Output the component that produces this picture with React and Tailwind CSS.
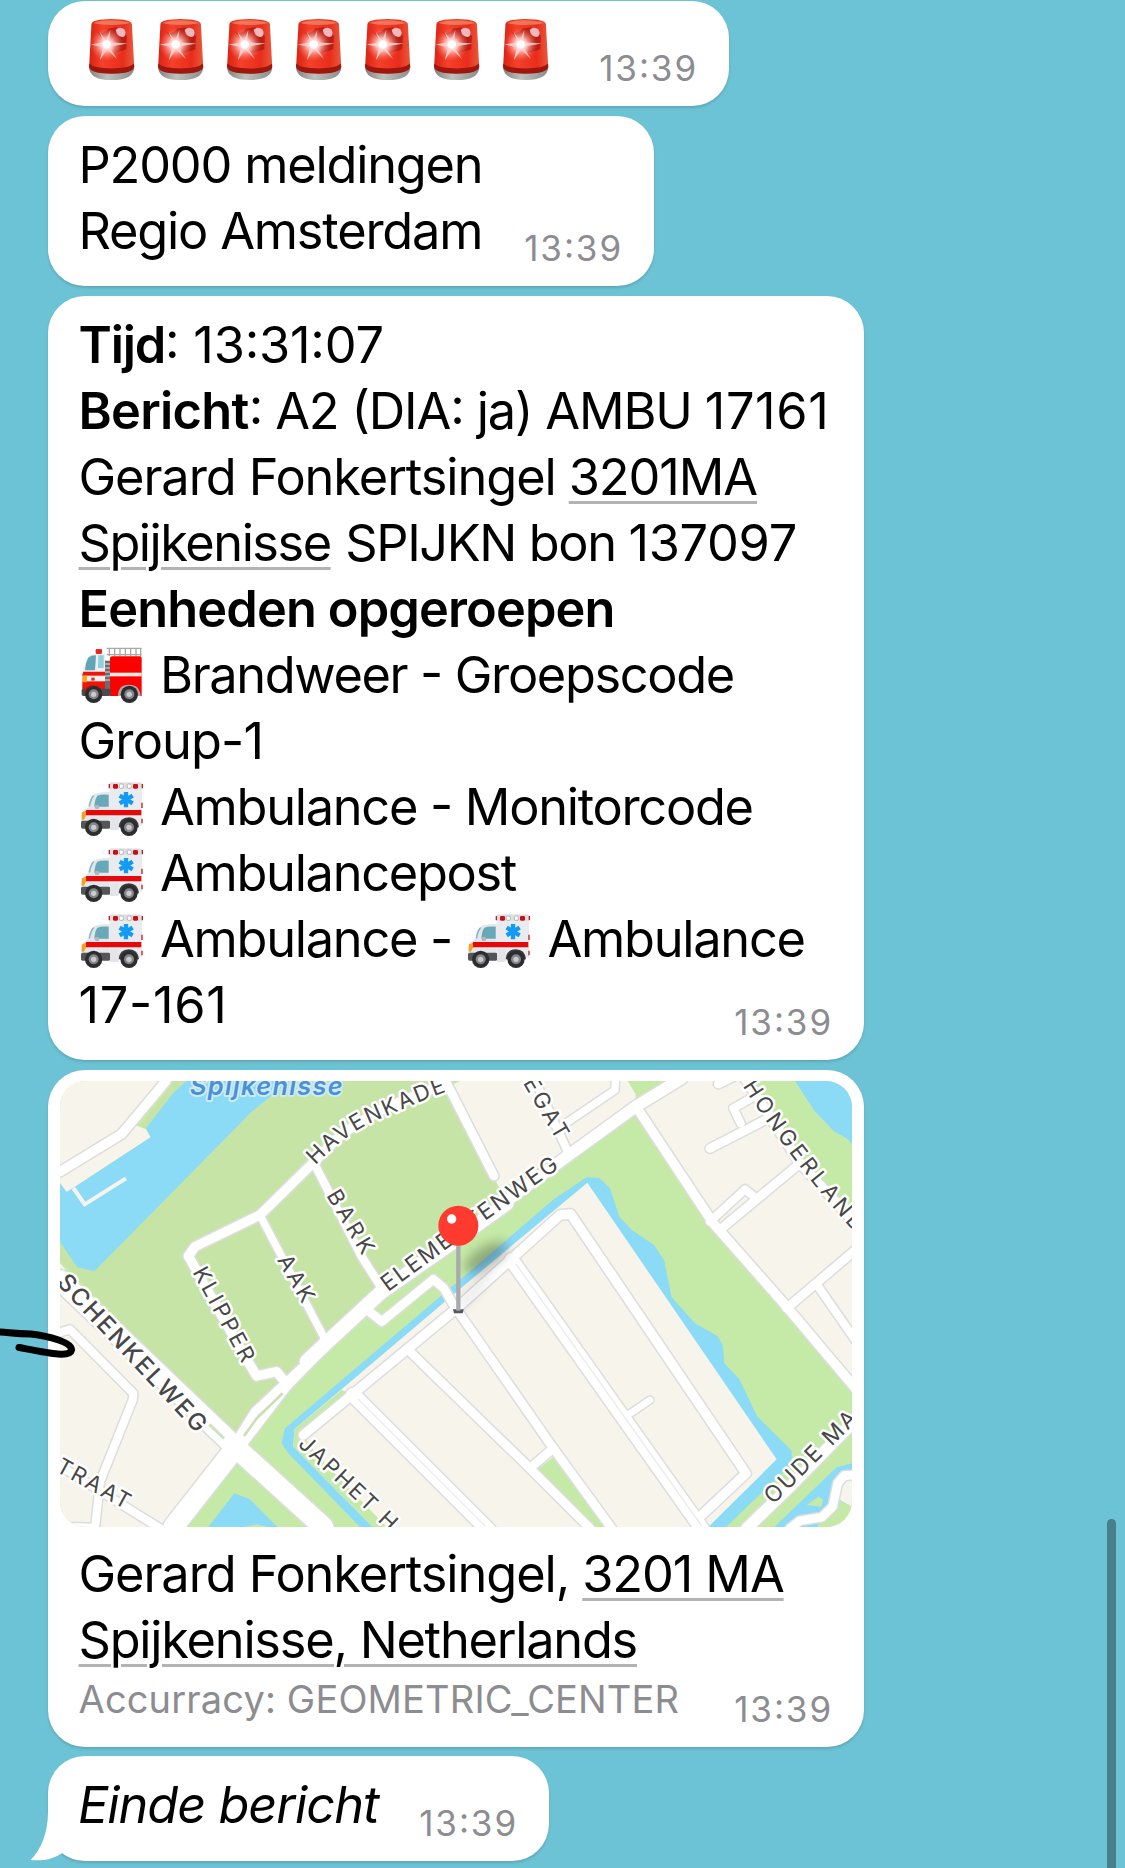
import React from "react";

function Siren() {
  return (
    <svg viewBox="145 54 144 190" className="h-[63px] w-[48px]">
      <defs>
        <linearGradient id="sirenBody" x1="0" x2="1" y1="0" y2="0">
          <stop offset="0" stopColor="#d92214" />
          <stop offset="0.3" stopColor="#f5402a" />
          <stop offset="0.75" stopColor="#e92d1c" />
          <stop offset="1" stopColor="#e85a3c" />
        </linearGradient>
        <linearGradient id="sirenBase" x1="0" x2="1" y1="0" y2="0">
          <stop offset="0" stopColor="#7f8280" />
          <stop offset="0.4" stopColor="#bfc1bd" />
          <stop offset="1" stopColor="#8b8d8a" />
        </linearGradient>
        <radialGradient id="sirenGlow">
          <stop offset="0" stopColor="#fff" />
          <stop offset="0.35" stopColor="#ffd9d4" stopOpacity="0.9" />
          <stop offset="1" stopColor="#ff6a5a" stopOpacity="0" />
        </radialGradient>
      </defs>
      <path d="M148 200 Q147 241 216 241 Q285 241 284 200 Z" fill="url(#sirenBase)" />
      <path d="M155 72 Q156 58 215 57 Q275 58 277 72 L284 200 Q280 221 216 221 Q152 221 148 200 Z" fill="url(#sirenBody)" />
      <path d="M148 192 Q165 206 216 206 Q267 206 283 192 L284 202 Q280 222 216 222 Q152 222 148 202 Z" fill="#9c170d" />
      <path d="M160 69 Q180 61 216 61 Q252 61 272 69 Q250 75 216 75 Q180 75 160 69 Z" fill="#ee8a6a" opacity="0.75" />
      <path d="M172 95 Q190 108 206 86 L232 82 L262 108 L260 148 L224 160 L216 130 L190 122 Z" fill="#a81a10" opacity="0.75" />
      <path d="M228 90 Q240 78 254 88 Q262 100 254 110 Q240 114 232 102 Z" fill="#f0b9c0" />
      <circle cx="201" cy="134" r="50" fill="url(#sirenGlow)" />
      <path d="M201 134 m-48 0 L192 127 L180 96 L199 122 L212 90 L208 127 L264 131 L208 141 L232 178 L202 148 L180 182 L190 142 Z" fill="#ffd5d2" opacity="0.85" />
      <circle cx="201" cy="134" r="13" fill="#fff" />
    </svg>
  );
}

function Wheel({ cx, cy }) {
  return (
    <g>
      <circle cx={cx} cy={cy} r="26" fill="#2d2d2f" />
      <circle cx={cx} cy={cy} r="15" fill="#85868a" />
      <circle cx={cx} cy={cy} r="8" fill="#c9cacd" />
    </g>
  );
}

function FireTruck() {
  return (
    <svg viewBox="27 18 195 180" className="mr-[16.5px] inline-block h-[60px] w-[65px] align-[-13.5px]">
      <path d="M110 25 H215 M110 44 H215 M118 25 V48 M134 25 V48 M150 25 V48 M166 25 V48 M182 25 V48 M198 25 V48 M212 25 V48" stroke="#a6a8aa" strokeWidth="4" fill="none" />
      <rect x="77" y="27" width="19" height="15" rx="4" fill="#e8281c" />
      <path d="M62 42 H106 V166 H36 V102 Q42 66 62 42 Z" fill="#eceef0" />
      <path d="M56 52 Q64 46 78 46 L75 91 H45 Q47 66 56 52 Z" fill="#5fa6b5" />
      <path d="M85 46 H101 V84 H84 Z" fill="#8fd0dc" />
      <path d="M40 95 H106 V148 H37 V104 Z" fill="#f01408" />
      <path d="M37 107 H106 V124 H37 Z" fill="#f3efed" />
      <rect x="64" y="113" width="10" height="9" fill="#c93a34" />
      <path d="M38 107 H52 L50 127 H38 Z" fill="#f7a51e" />
      <rect x="105" y="62" width="17" height="100" fill="#6a6c6f" />
      <path d="M105 72 H122 M105 84 H122 M105 96 H122 M105 108 H122 M105 120 H122" stroke="#b5b7ba" strokeWidth="4" />
      <path d="M120 53 Q122 49 128 49 H210 Q215 49 215 54 V168 H120 Z" fill="#fb0200" />
      <rect x="120" y="98" width="95" height="11" fill="#f6e9e7" />
      <path d="M144 168 Q144 134 177 134 Q209 134 212 168 Z" fill="#a9aaac" />
      <rect x="35" y="146" width="87" height="22" rx="5" fill="#4a4b4d" />
      <path d="M43 160 Q45 136 70 136 Q92 136 96 160 Z" fill="#bb1a14" />
      <Wheel cx="71" cy="163" />
      <Wheel cx="178" cy="163" />
    </svg>
  );
}

function Ambulance() {
  return (
    <svg viewBox="57 445 195 180" className="mr-[16.5px] inline-block h-[60px] w-[65px] align-[-13.5px]">
      <path d="M149 458 Q150 454 156 454 H240 Q246 455 246 462 V585 H149 Z" fill="#e9ebee" />
      <rect x="148" y="457" width="98" height="17" rx="5" fill="#dcdee2" />
      <rect x="159" y="460" width="15" height="14" rx="4" fill="#c90f12" />
      <rect x="219" y="460" width="15" height="14" rx="4" fill="#c90f12" />
      <rect x="178" y="460" width="12" height="13" rx="4" fill="#fff" stroke="#9b9da1" strokeWidth="2" />
      <rect x="202" y="460" width="12" height="13" rx="4" fill="#fff" stroke="#9b9da1" strokeWidth="2" />
      <path d="M148 460 V473 M247 460 V473 M246 516 V532 M246 564 V578" stroke="#c7191b" strokeWidth="4" />
      <path d="M84 530 Q90 502 104 490 Q114 484 149 484 V586 H64 V546 Q70 540 84 530 Z" fill="#e4e6e9" />
      <path d="M112 495 Q122 491 146 492 V528 H103 Q104 506 112 495 Z" fill="#67a9b8" />
      <path d="M86 526 Q90 502 99 494 L103 495 Q94 506 90 528 Z" fill="#79b9c8" />
      <circle cx="111" cy="529" r="7" fill="#b3b6ba" />
      <path d="M79 538 H244 V554 H70 Z" fill="#e5090c" />
      <path d="M66 545 Q72 541 78 543 Q80 558 70 568 L65 566 Z" fill="#f8a01d" />
      <path d="M198 484 V530 M179 495 L218 518 M218 495 L179 518" stroke="#139af2" strokeWidth="13" />
      <rect x="63" y="570" width="88" height="24" rx="5" fill="#54565a" />
      <path d="M150 560 H176 V598 H150 Z" fill="#e3e5e8" />
      <path d="M176 590 Q178 560 207 560 Q234 560 237 590 Z" fill="#3a3b3e" />
      <Wheel cx="101" cy="590" />
      <Wheel cx="207" cy="590" />
    </svg>
  );
}

const wideRoads = [
  ["M60 660 L590 1165 L850 1401", 60],
  ["M400 1401 L585 1165", 60],
];

const roads = [
  ["M378 63 L245 222 L60 335", 28],
  ["M595 1135 L645 1055 L800 910", 26],
  ["M608 1150 L740 978 L865 850", 28],
  ["M800 905 L860 848 L1025 695 L1240 545 L1400 430", 42],
  ["M1390 430 L1580 290 L1787 140 L1925 55", 34],
  ["M735 965 L710 935 L650 948 L615 890 L445 588 L465 560 L660 465 L820 308 L905 222 L1010 155 L1215 70", 28],
  ["M1205 40 L1362 348", 26],
  ["M665 475 L855 838", 22],
  ["M825 315 L965 590 L1022 680", 24],
  ["M985 752 L1025 785 L1180 658 L1212 685 L1252 755", 26],
  ["M790 1125 L1250 745 L1560 465 L1592 462 L2118 1240 L1975 1375", 28],
  ["M1480 50 L1582 272", 24],
  ["M1727 40 L1725 90 L1570 195", 22],
  ["M1415 600 L1985 1405", 42],
  ["M1768 1062 L1830 1020", 20],
  ["M1258 760 L1540 1165 L1715 1405", 26],
  ["M1105 870 L1230 992 L1470 1225 L1650 1405", 26],
  ["M1470 1225 L1540 1165", 26],
  ["M940 1005 L1345 1410", 44],
  ["M50 820 L90 808 L280 1000 L278 1020 L180 1265 L165 1405", 24],
  ["M40 1205 L360 1405", 24],
  ["M60 1396 L165 1399", 16],
  ["M1795 150 L2020 490 L2240 740 L2446 985", 28],
  ["M2105 40 L2280 310 L2446 490", 28],
  ["M2010 265 L2175 180", 26],
  ["M2102 190 L2080 145 L2150 105", 24],
  ["M2035 72 L2080 50", 26],
  ["M2010 485 L2115 388 L2145 412", 24],
  ["M2045 505 L2280 310", 26],
  ["M2240 745 L2446 570", 26],
  ["M2335 680 L2446 840", 24],
  ["M2120 1405 L2240 1290 L2446 1080", 34],
  ["M2446 1245 L2412 1247 L2393 1270 L2378 1340 L2345 1372 L2280 1382 L2250 1405", 26],
];

const labels = [
  ["havenkade", "M826 316 C880 260 940 211 1010 181 S1160 116 1228 92", "HAVENKADE", 456, 66, 400],
  ["bark", "M858 406 L974 600", "BARK", 212, 66, 400],
  ["aak", "M710 600 L794 744", "AAK", 154, 66, 400],
  ["klipper", "M457 636 L610 918", "KLIPPER", 314, 66, 400],
  ["schenkelweg", "M48 670 L482 1134", "SCHENKELWEG", 618, 72, 500],
  ["straat", "M44 1232 L266 1354", "TRAAT", 242, 66, 400],
  ["japhet", "M772 1156 L1060 1428", "JAPHET H", 378, 66, 400],
  ["element", "M1044 697 L1300 508 L1576 312", "ELEMENTENWEG", 636, 68, 400],
  ["gegat", "M1448 68 L1560 258", "EGAT", 202, 66, 400],
  ["hongerland", "M2108 78 Q2250 300 2455 530", "HONGERLAND", 556, 66, 400],
  ["oudemaas", "M2200 1335 L2470 1065", "OUDE MA", 362, 68, 400],
];

function MapView() {
  return (
    <svg viewBox="60 63 2376 1338" className="block h-[446px] w-[792px] rounded-[26px]">
      <defs>
        <filter id="pinShadow" x="-50%" y="-50%" width="200%" height="200%">
          <feGaussianBlur stdDeviation="17" />
        </filter>
        {labels.map(([id, d]) => (
          <path key={id} id={id} d={d} />
        ))}
      </defs>
      <rect x="60" y="63" width="2376" height="1338" fill="#c5e9a6" />
      <path d="M60 545 L400 63 H1215 L1380 400 L1025 690 L580 1130 L60 600 Z" fill="#c5e4a6" />
      <path d="M60 63 H390 L285 195 L318 208 L332 232 L105 380 L80 396 L60 370 Z" fill="#f7f4ec" />
      <path d="M440 63 L400 98 L318 205 L332 232 L105 380 L80 396 L60 370 V545 L112 622 L163 634 L635 155 L750 63 Z" fill="#8bdaf6" />
      <path d="M100 384 L134 433 L258 355" stroke="#f7f4ec" strokeWidth="12" fill="none" />
      <path d="M60 610 L560 1150 L370 1401 H60 Z" fill="#f7f4ec" />
      <path d="M1225 80 L1260 63 H1763 L1787 103 V130 L1580 275 L1380 388 Z" fill="#f7f4ec" />
      <path d="M1795 140 L1930 63 H2110 L2436 490 V1000 L2030 510 Z" fill="#f7f4ec" />
      <path d="M2265 63 L2325 155 L2382 214 L2420 235 L2436 252 V63 Z" fill="#8bdaf6" />
      <path d="M1640 352 L1678 354 L1710 385 L1738 470 L1775 510 L1842 555 L1872 600 L1895 712 L1965 790 L2032 828 L2048 855 L2053 910 L2098 958 L2152 1070 L2255 1172 V1212 L2058 1401 H960 L745 1180 L725 1150 L735 1105 L1230 685 L1545 415 Z" fill="#8bdaf6" />
      <path d="M1642 368 L2210 1198 L2005 1401 H998 L760 1160 L763 1108 L1250 695 Z" fill="#f7f4ec" />
      <path d="M763 1108 L905 990 L925 1000 L785 1120 L830 1185 L1040 1401 H998 L760 1160 Z" fill="#c5e9a6" />
      <path d="M1488 1232 L1548 1185 L1705 1401 H1660 Z" fill="#c5e9a6" />
      <path d="M505 1401 L583 1300 L630 1318 L712 1401 H685 L650 1393 L610 1401 Z" fill="#8bdaf6" />
      <path d="M2203 1401 L2390 1222 L2436 1210 V1330 L2345 1401 Z" fill="#8bdaf6" />
      <path d="M2300 1335 L2335 1310 L2348 1318 L2345 1340 Z" fill="#c5e9a6" />
      <path d="M2400 1260 H2436 V1340 L2395 1318 Z" fill="#f7f4ec" />
      <path d="M2330 1401 L2395 1320 L2436 1340 V1375 L2380 1401 Z" fill="#c5e9a6" />
      <path d="M2375 1401 L2436 1378 V1401 Z" fill="#8bdaf6" />

      <g fill="none" stroke="#dcdddd" strokeLinejoin="round" strokeLinecap="round">
        {wideRoads.concat(roads).map(([d, w]) => (
          <path key={d} d={d} strokeWidth={w + 9} />
        ))}
      </g>
      <g fill="none" stroke="#ffffff" strokeLinejoin="round" strokeLinecap="round">
        {wideRoads.concat(roads).map(([d, w]) => (
          <path key={d} d={d} strokeWidth={w} />
        ))}
      </g>
      <path d="M508 1093 L552 1135" stroke="#cfe3bd" strokeWidth="9" />
      <path d="M612 1128 L650 1075 L728 1000" stroke="#c9dfb4" strokeWidth="8" fill="none" />
      <path d="M1428 612 L1985 1398 M955 1018 L1335 1398" stroke="#ebebeb" strokeWidth="4" fill="none" />

      <text x="450" y="105" fontSize="76" fontWeight="600" fontStyle="italic" textLength="458" fill="#4a90d9" stroke="#cdebf0" strokeWidth="12" strokeLinejoin="round" paintOrder="stroke">
        Spijkenisse
      </text>
      <g fill="#474747" stroke="#fff" strokeWidth="15" strokeLinejoin="round" paintOrder="stroke">
        {labels.map(([id, , text, len, size, weight]) => (
          <text key={id} fontSize={size} fontWeight={weight} textLength={len}>
            <textPath href={"#" + id} textLength={len}>
              {text}
            </textPath>
          </text>
        ))}
      </g>

      <ellipse cx="1338" cy="592" rx="72" ry="30" transform="rotate(-32 1338 592)" fill="#000" opacity="0.28" filter="url(#pinShadow)" />
      <path d="M1262 740 L1345 640" stroke="#000" strokeWidth="26" opacity="0.1" filter="url(#pinShadow)" />
      <path d="M1239 748 H1271 L1268 760 H1242 Z" fill="#55575a" />
      <rect x="1248.500" y="550" width="13" height="202" fill="#a8aaad" />
      <circle cx="1255" cy="497" r="60" fill="#ff3b30" />
      <circle cx="1235" cy="477" r="14" fill="#fff" />
    </svg>
  );
}

function Bubble({ className, children }) {
  return (
    <div className={"flex shrink-0 items-end justify-between rounded-[37px] bg-white shadow-[0_2px_3px_rgba(0,0,0,0.14)] " + className}>
      {children}
      <time className="mr-[31px] -ml-[130px] shrink-0 pb-[20px] text-[35px] leading-[36px] tracking-[1.9px] text-[#8c8c91]">13:39</time>
    </div>
  );
}

function Line({ className = "", children }) {
  return <div className={"h-[66.1px] leading-[66.1px] " + className}>{children}</div>;
}

function Link({ children }) {
  return <span className="underline decoration-[#b3b3b3] decoration-[3px] underline-offset-[6px]">{children}</span>;
}

export default function App() {
  return (
    <div className="relative flex h-[1868px] w-[1125px] flex-col gap-[9.5px] overflow-hidden bg-[#6dc3d6] pt-px pl-12 font-[Inter,sans-serif] text-[50.5px] whitespace-pre text-black [font-feature-settings:'calt'_1]">
      <Bubble className="h-[105px] w-[681px]">
        <div className="flex gap-[21px] self-start pt-[17px] pl-10">
          {[0, 1, 2, 3, 4, 5, 6].map((i) => (
            <Siren key={i} />
          ))}
        </div>
      </Bubble>

      <Bubble className="h-[170.5px] w-[606px]">
        <div className="self-start pt-4 pl-[30.5px] tracking-[-1.2px]">
          <Line>P2000 meldingen</Line>
          <Line>Regio Amsterdam</Line>
        </div>
      </Bubble>

      <Bubble className="h-[764.5px] w-[816px]">
        <div className="self-start pt-[16px] pl-[30.5px]">
          <Line className="tracking-[-0.2px]">
            <b className="font-semibold tracking-[-1.2px]">Tijd</b>: 13:31:07
          </Line>
          <Line className="tracking-[-1.15px]">
            <b className="font-semibold tracking-[-0.7px]">Bericht</b>: A2 (DIA: ja) AMBU <span className="tracking-[0.6px]">17161</span>
          </Line>
          <Line className="tracking-[-1.09px]">
            Gerard Fonkertsingel <Link>3201MA</Link>
          </Line>
          <Line className="tracking-[-1.4px]">
            <span className="tracking-[-1.5px]"><Link>Spijkenisse</Link></span><span className="tracking-[0.5px]"> </span>SPIJKN bon <span className="tracking-[-0.3px]">137097</span>
          </Line>
          <Line className="font-semibold tracking-[-0.87px]">Eenheden opgeroepen</Line>
          <Line className="tracking-[-1.36px]"><FireTruck />Brandweer - Groepscode</Line>
          <Line className="tracking-[-0.86px]">Group-1</Line>
          <Line className="tracking-[-1.28px]"><Ambulance />Ambulance - Monitorcode</Line>
          <Line className="tracking-[-1.3px]"><Ambulance />Ambulancepost</Line>
          <Line className="tracking-[-1.27px]"><Ambulance />Ambulance - <span className="pl-px"><Ambulance /></span>Ambulance</Line>
          <Line className="tracking-[0.7px]">17-161</Line>
        </div>
      </Bubble>

      <Bubble className="h-[677px] w-[816px]">
        <div className="self-start pt-[11.5px] pl-3">
          <MapView />
          <div className="pt-[14px] pl-[18.5px]">
            <Line className="tracking-[-1.09px]">
              Gerard Fonkertsingel, <Link>3201 MA</Link>
            </Line>
            <Line className="tracking-[-1.25px]"><Link>Spijkenisse, Netherlands</Link></Line>
            <div className="-mt-px text-[38px] leading-[54px] tracking-[0.16px] text-[#8c8c91]">Accurracy: GEOMETRIC_CENTER</div>
          </div>
        </div>
      </Bubble>

      <Bubble className="h-[104.5px] w-[501px]">
        <div className="self-start pt-[15.5px] pl-[30px] tracking-[-1.05px]">
          <Line className="italic">Einde bericht</Line>
        </div>
      </Bubble>

      <svg viewBox="30 1810 50 52" className="absolute top-[1810px] left-[30px] h-[52px] w-[50px]">
        <path d="M48 1812 Q47.500 1843 30.500 1860 Q49 1862 62.500 1853 L78 1845 V1812 Z" fill="#fff" />
      </svg>
      <svg viewBox="0 1320 90 50" fill="none" className="absolute top-[1320px] left-0 h-[50px] w-[90px]">
        <path d="M-4 1332 C8 1332 12 1334 31 1334 C48 1336 72 1342 71.500 1350 C70 1358 48 1353 19 1347.500" stroke="#000" strokeWidth="7" strokeLinecap="round" />
      </svg>
      <div className="absolute top-[1519px] left-[1107px] h-[349px] w-[9px] rounded-t-full bg-[#487f8b]" />
    </div>
  );
}
